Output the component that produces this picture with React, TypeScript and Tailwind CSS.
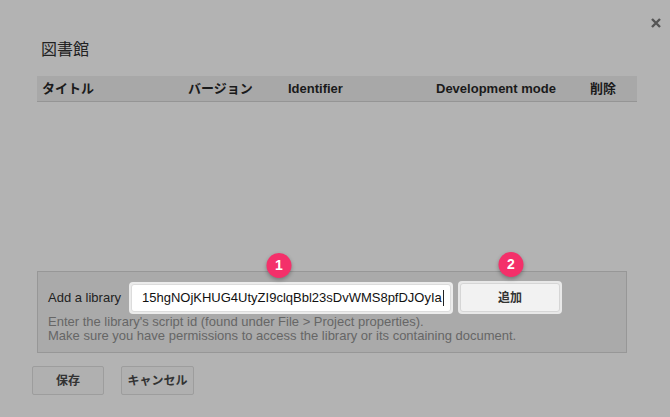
import React from 'react';

const font = { fontFamily: '"Liberation Sans", Arial, "Noto Sans CJK JP", sans-serif' };

const Badge = ({ n, shift = 0 }: { n: number; shift?: number }) => (
  <div
    className="absolute -top-[29px] left-1/2 w-[25px] h-[25px] rounded-full bg-[#f4306a] text-white text-[14px] font-bold flex items-center justify-center shadow-[0_2px_4px_rgba(0,0,0,0.3)]"
    style={{ transform: `translateX(calc(-50% + ${shift}px))` }}
  >
    {n}
  </div>
);

const App = () => {
  return (
    <div className="w-[670px] h-[417px] bg-[#b3b3b3] relative overflow-hidden text-[#222]" style={font}>
      {/* close */}
      <button className="absolute right-[7px] top-[16px] w-[14px] h-[14px]">
        <svg viewBox="0 0 14 14" className="w-[14px] h-[14px]">
          <path d="M3 3 L11 11 M11 3 L3 11" stroke="#555" strokeWidth="2.4" />
        </svg>
      </button>

      <div className="pt-[38px] pl-[37px] pr-[33px]">
        <h2 className="text-[16px] pl-[4px] h-[24px] leading-[24px] text-[#222]">図書館</h2>

        {/* table header */}
        <div className="mt-[14px] h-[26px] bg-[#a8a8a8] border-b border-[#959595] flex items-center text-[13px] font-bold text-[#1a1a1a]">
          <div className="w-[151px] pl-[5px]">タイトル</div>
          <div className="w-[100px]">バージョン</div>
          <div className="w-[148px]">Identifier</div>
          <div className="w-[154px]">Development mode</div>
          <div>削除</div>
        </div>

        <div className="h-[169px]" />

        {/* add library */}
        <div className="w-[590px] border border-[#979797] bg-[#aaaaaa] pl-[10px] pt-[9px] pb-[9px]">
          <div className="flex items-center">
            <span className="text-[13px] text-[#222] w-[81px]">Add a library</span>
            <div className="relative">
              <Badge n={1} shift={-12} />
              <div className="w-[324px] h-[32px] rounded-[4px] bg-[#ececec] p-[2px]">
                <div className="w-full h-full rounded-[3px] bg-white border border-[#dcdcdc] flex items-center pl-[10px] text-[13px] text-[#111] overflow-hidden whitespace-nowrap">
                  15hgNOjKHUG4UtyZI9clqBbl23sDvWMS8pfDJOyIa<span className="w-px h-[16px] bg-[#222] ml-[1px]" />
                </div>
              </div>
            </div>
            <div className="relative ml-[5px]">
              <Badge n={2} shift={1} />
              <div className="w-[104px] h-[33px] rounded-[4px] bg-[#e8e8e8] p-[2px]">
                <div className="w-full h-full rounded-[3px] bg-[#f2f2f2] border border-[#d6d6d6] flex items-center justify-center text-[12px] font-bold text-[#333]">
                  追加
                </div>
              </div>
            </div>
          </div>
          <div className="mt-[1px] text-[13px] leading-[14px] text-[#666]">
            <div>Enter the library's script id (found under File &gt; Project properties).</div>
            <div>Make sure you have permissions to access the library or its containing document.</div>
          </div>
        </div>
      </div>

      {/* footer buttons */}
      <div className="flex gap-[17px] pl-[32px] mt-[13px]">
        <button className="w-[72px] h-[29px] rounded-[2px] border border-[#9d9d9d] bg-[#b0b0b0] text-[12px] font-bold text-[#333]">保存</button>
        <button className="w-[73px] h-[29px] rounded-[2px] border border-[#9d9d9d] bg-[#b0b0b0] text-[12px] font-bold text-[#333]">キャンセル</button>
      </div>
    </div>
  );
};

export default App;
